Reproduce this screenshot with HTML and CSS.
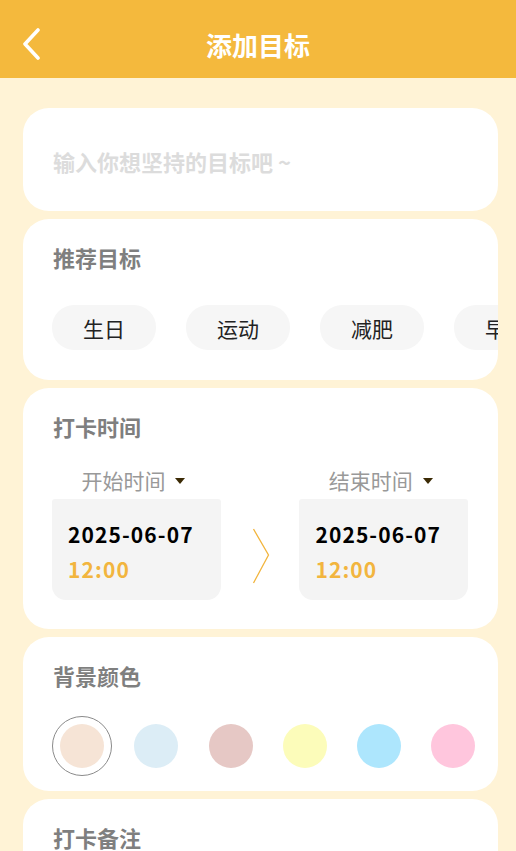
FILE: index.html
```html
<!DOCTYPE html>
<html lang="zh-CN">
<head>
    <meta charset="UTF-8">
    <meta name="viewport" content="width=device-width, initial-scale=1.0">
    <title>添加目标</title>
    <link rel="stylesheet" href="styles.css">
</head>
<body>
<div class="header">
    <svg class="back" width="20" height="32" viewBox="0 0 20 32">
        <path d="M16 2 L3 16 L16 30" fill="none" stroke="#fff" stroke-width="3.6" stroke-linecap="round" stroke-linejoin="round"/>
    </svg>
    <div class="title">添加目标</div>
</div>

<div class="main">
    <div class="card card-input">
        <div class="placeholder">输入你想坚持的目标吧 ~</div>
    </div>

    <div class="card card-chips">
        <div class="card-title">推荐目标</div>
        <div class="chips">
            <div class="chip">生日</div>
            <div class="chip">运动</div>
            <div class="chip">减肥</div>
            <div class="chip">早起</div>
            <div class="chip">读书</div>
        </div>
    </div>

    <div class="card">
        <div class="card-title">打卡时间</div>
        <div class="times">
            <div class="time-col">
                <div class="time-label">开始时间 <span class="tri"></span></div>
                <div class="time-box">
                    <div class="date">2025-06-07</div>
                    <div class="clock">12:00</div>
                </div>
            </div>
            <div class="time-arrow">
                <svg width="18" height="56" viewBox="0 0 18 56">
                    <path d="M1.5 1 L16.5 27 L1.5 55" fill="none" stroke="#f2b53e" stroke-width="1.3"/>
                </svg>
            </div>
            <div class="time-col">
                <div class="time-label">结束时间 <span class="tri"></span></div>
                <div class="time-box">
                    <div class="date">2025-06-07</div>
                    <div class="clock">12:00</div>
                </div>
            </div>
        </div>
    </div>

    <div class="card card-colors">
        <div class="card-title">背景颜色</div>
        <div class="swatches">
            <div class="swatch selected"><span class="dot c1"></span></div>
            <div class="swatch"><span class="dot c2"></span></div>
            <div class="swatch"><span class="dot c3"></span></div>
            <div class="swatch"><span class="dot c4"></span></div>
            <div class="swatch"><span class="dot c5"></span></div>
            <div class="swatch"><span class="dot c6"></span></div>
        </div>
    </div>

    <div class="card">
        <div class="card-title">打卡备注</div>
        <div class="note-area"></div>
    </div>
</div>
</body>
</html>
```

FILE: styles.css
```css
body {
    margin: 0;
    background-color: #fff3d6;
    font-family: "Noto Sans CJK SC", "Noto Sans", sans-serif;
    overflow: hidden;
}
.header {
    height: 78px;
    background-color: #f4b93d;
    display: flex;
    align-items: center;
    justify-content: center;
    position: relative;
}
.back {
    position: absolute;
    left: 22px;
    top: 28px;
}
.title {
    color: #fff;
    font-size: 26px;
    font-weight: bold;
    margin-top: 11px;
    line-height: 36px;
}
.main {
    padding: 30px 18px 0 23px;
    display: flex;
    flex-direction: column;
    gap: 8px;
}
.card {
    background-color: #fff;
    border-radius: 26px;
    padding: 23px 30px 29px;
    overflow: hidden;
}
.card-input {
    height: 103px;
    box-sizing: border-box;
    padding: 0 30px;
    display: flex;
    align-items: center;
}
.placeholder {
    color: #dcdcdc;
    font-size: 22px;
    font-weight: bold;
    padding-top: 3px;
}
.card-title {
    color: #7f7f7f;
    font-size: 22px;
    font-weight: bold;
    line-height: 30px;
}
.card-chips {
    padding-bottom: 30px;
}
.chips {
    display: flex;
    gap: 30px;
    margin: 33px -30px 0 -1px;
    overflow: hidden;
}
.chip {
    flex: 0 0 104px;
    height: 45px;
    border-radius: 22px;
    background-color: #f6f6f6;
    color: #222;
    font-size: 21px;
    display: flex;
    align-items: center;
    justify-content: center;
}
.times {
    display: flex;
    margin-top: 24px;
    margin-left: -1px;
}
.time-col {
    width: 169px;
}
.time-label {
    color: #999;
    font-size: 21px;
    line-height: 30px;
    text-align: center;
    padding-right: 6px;
    margin-bottom: 4px;
}
.tri {
    display: inline-block;
    width: 0;
    height: 0;
    border-left: 5px solid transparent;
    border-right: 5px solid transparent;
    border-top: 6px solid #3b2a05;
    vertical-align: middle;
    margin-left: 5px;
    margin-top: -4px;
}
.time-box {
    height: 101px;
    box-sizing: border-box;
    background-color: #f4f4f4;
    border-radius: 3px 3px 14px 14px;
    padding: 19px 16px 0;
}
.date {
    font-size: 21px;
    font-weight: bold;
    color: #000;
    line-height: 32px;
    letter-spacing: 1.1px;
}
.clock {
    font-size: 21px;
    font-weight: bold;
    color: #f2b53e;
    line-height: 32px;
    margin-top: 3px;
    letter-spacing: 1.1px;
}
.time-arrow {
    width: 79px;
    display: flex;
    justify-content: center;
    padding-top: 63px;
    padding-left: 2px;
    box-sizing: border-box;
}
.card-colors {
    padding-bottom: 15px;
}
.swatches {
    display: flex;
    gap: 14.3px;
    margin: 26px -30px 0 -1px;
}
.swatch {
    flex: 0 0 60px;
    width: 60px;
    height: 60px;
    box-sizing: border-box;
    border-radius: 50%;
    display: flex;
    align-items: center;
    justify-content: center;
}
.swatch.selected {
    border: 1.5px solid #8a8a8a;
}
.dot {
    width: 44px;
    height: 44px;
    border-radius: 50%;
}
.c1 { background-color: #f6e4d6; }
.c2 { background-color: #dcedf6; }
.c3 { background-color: #e6c8c5; }
.c4 { background-color: #fcfcba; }
.c5 { background-color: #ade6fd; }
.c6 { background-color: #ffc6dd; }
.note-area {
    height: 120px;
}
```
